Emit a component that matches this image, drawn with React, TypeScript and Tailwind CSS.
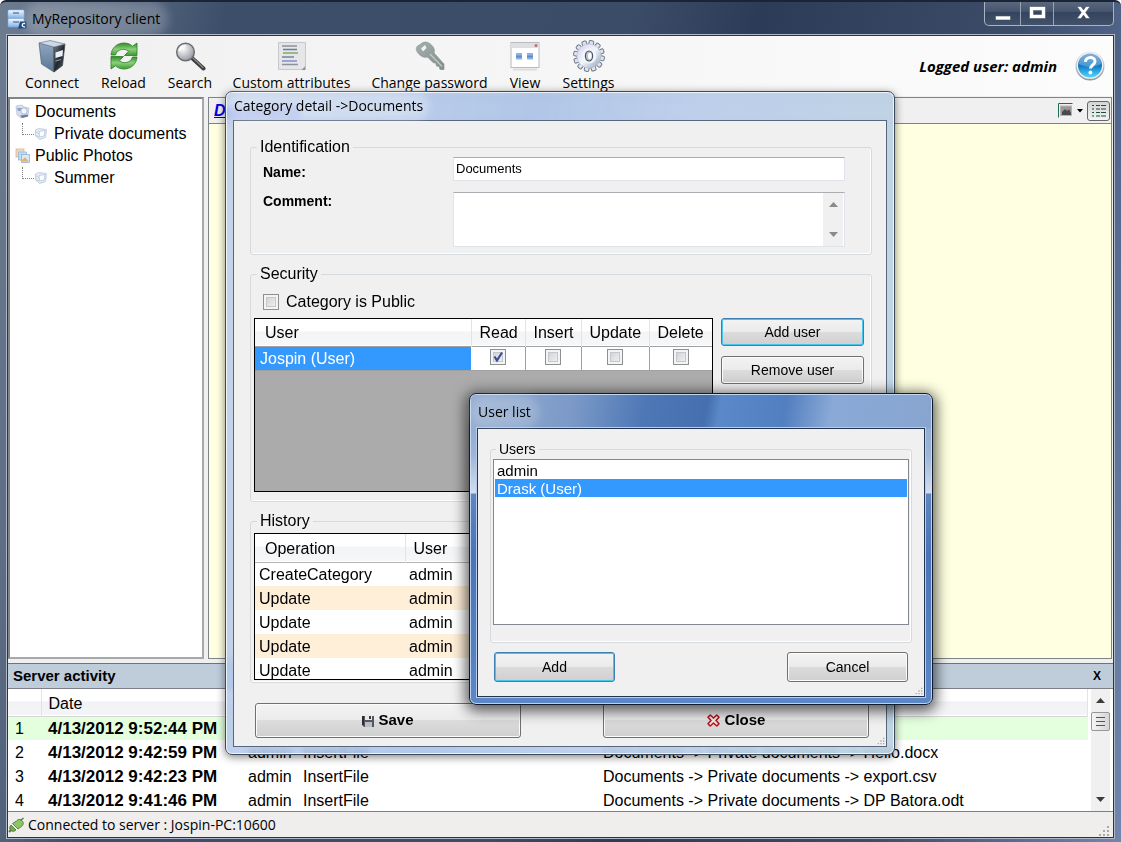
import React, { useState } from "react";

const UI = "font-['Open_Sans',sans-serif]";
const GRAY_BTN =
  "border border-[#707070] rounded-[3px] bg-[linear-gradient(#f3f3f3_0%,#ebebeb_48%,#dcdcdc_50%,#cfcfcf_100%)] text-black shadow-[inset_0_0_0_1px_#fbfbfb]";
const FOCUS_BTN =
  "border border-[#3c7fb1] rounded-[3px] bg-[linear-gradient(#f3f3f3_0%,#ebebeb_48%,#dcdcdc_50%,#cfcfcf_100%)] text-black shadow-[inset_0_0_0_1px_#48c5ee]";

/* ---------- icons ---------- */

const AppIcon = () => (
  <svg width="20" height="20" viewBox="0 0 20 20">
    <defs>
      <linearGradient id="cab" x1="0" y1="0" x2="0" y2="1">
        <stop offset="0" stopColor="#f4faff" />
        <stop offset="1" stopColor="#7fb2ee" />
      </linearGradient>
    </defs>
    <rect x="1" y="1" width="16" height="8" rx="1" fill="url(#cab)" stroke="#8fb7e6" strokeWidth="0.6" />
    <rect x="1" y="9.5" width="16" height="8.5" rx="1" fill="url(#cab)" stroke="#7fa9da" strokeWidth="0.6" />
    <path d="M6 4h6M6 13h6" stroke="#6f7f92" strokeWidth="1.4" />
    <path d="M11 19.5l2-7h6.5v7z" fill="#174a86" />
    <path d="M18 14.6c-3.6-1-3.6 4.2 0 3.2" fill="none" stroke="#fff" strokeWidth="1.3" />
  </svg>
);

const ServerIcon = () => (
  <svg width="32" height="34" viewBox="0 0 32 34">
    <defs>
      <linearGradient id="sv1" x1="0" y1="0" x2="0" y2="1">
        <stop offset="0" stopColor="#8fa6bf" />
        <stop offset="1" stopColor="#5a7694" />
      </linearGradient>
      <linearGradient id="sv2" x1="0" y1="0" x2="1" y2="1">
        <stop offset="0" stopColor="#7a8086" />
        <stop offset="0.5" stopColor="#23282e" />
        <stop offset="1" stopColor="#5d646c" />
      </linearGradient>
    </defs>
    <path d="M3 4l15 4v25L5.500 25z" fill="url(#sv1)" stroke="#4a6079" strokeWidth="0.7" />
    <path d="M18 8l11-3-2.500 21.500L18 33z" fill="url(#sv2)" stroke="#3a4148" strokeWidth="0.7" />
    <path d="M3 4l11-2.500 15 3.500-11 3z" fill="#cdd9e6" stroke="#6c8097" strokeWidth="0.7" />
    <path d="M19.500 13.500l7.500-2.500-.5 6-7 2z" fill="#e9f1f8" />
    <path d="M19.500 22l5.500-1.500" stroke="#8fa0b2" strokeWidth="1" />
  </svg>
);

const ReloadIcon = () => (
  <svg width="32" height="32" viewBox="0 0 32 32">
    <defs>
      <linearGradient id="rl" x1="0" y1="0" x2="0" y2="1">
        <stop offset="0" stopColor="#2f8a25" />
        <stop offset="0.5" stopColor="#8ad07b" />
        <stop offset="1" stopColor="#3c9a30" />
      </linearGradient>
    </defs>
    <path d="M3 15C3.500 8 9 3 16 3c3.500 0 6.500 1.200 8.500 3.200L29 3v12.500H16.500l4-4.200C17 7.800 9 9 7.500 15z" fill="url(#rl)" stroke="#2d7f24" strokeWidth="0.8" />
    <path d="M29 17c-.5 7-6 12-13 12-3.500 0-6.500-1.200-8.500-3.200L3 29V16.500h12.500l-4 4.200C15 24.200 23 23 24.500 17z" fill="url(#rl)" stroke="#2d7f24" strokeWidth="0.8" />
  </svg>
);

const SearchIcon = () => (
  <svg width="32" height="32" viewBox="0 0 32 32">
    <defs>
      <radialGradient id="gl" cx="0.35" cy="0.3" r="0.8">
        <stop offset="0" stopColor="#ffffff" />
        <stop offset="0.6" stopColor="#b9bdc2" />
        <stop offset="1" stopColor="#8d9196" />
      </radialGradient>
    </defs>
    <path d="M18 18l11.500 10.500" stroke="#3d3d3d" strokeWidth="4" strokeLinecap="round" />
    <path d="M19 18l10 9.500" stroke="#8a8a8a" strokeWidth="1.200" strokeLinecap="round" />
    <circle cx="11.500" cy="12" r="8.800" fill="url(#gl)" stroke="#6a6d71" strokeWidth="1.500" />
    <path d="M5.500 11c.5-3 3-5 6-5" stroke="#fff" strokeWidth="1.600" fill="none" />
  </svg>
);

const AttributesIcon = () => (
  <svg width="32" height="32" viewBox="0 0 32 32">
    <path d="M2.500 2.500h27v24l-3 3h-24z" fill="#e6e6e8" stroke="#c6c8cb" />
    <path d="M25.500 30l4-4v4z" fill="#8d9094" />
    <path d="M6 6h15M6 24.500h16" stroke="#8b929b" strokeWidth="1.300" />
    <path d="M7 9.500h14" stroke="#6a7c96" strokeWidth="1.300" />
    <path d="M7 13h15" stroke="#79ad72" strokeWidth="1.600" />
    <path d="M6 17h12" stroke="#7b8593" strokeWidth="1.300" />
    <path d="M6 21h15" stroke="#7d8ed6" strokeWidth="1.600" />
  </svg>
);

const KeyIcon = () => (
  <svg width="32" height="32" viewBox="0 0 32 32">
    <defs>
      <linearGradient id="ky" x1="0" y1="0" x2="1" y2="1">
        <stop offset="0" stopColor="#a4b0ad" />
        <stop offset="1" stopColor="#7f8d8b" />
      </linearGradient>
    </defs>
    <path
      d="M9 2.500c3-1 6 0 8.500 2.500s3.500 5 2.500 8L30 24v5.500h-4l-.8-3-2.700-.5-.7-2.800-2.800-.7-5.500-5.500c-3 1-6-.2-8.500-2.700C2.500 11.500 1.500 9 3 6.500z"
      fill="url(#ky)"
      stroke="#8a9694"
      strokeWidth="0.7"
    />
    <path d="M7 8.500l4-3.500 1.500 3-3.500 3.500z" fill="#f2f4f3" />
    <path d="M16 14l12 12.500" stroke="#c2cac8" strokeWidth="1.300" />
  </svg>
);

const ViewIcon = () => (
  <svg width="32" height="32" viewBox="0 0 32 32">
    <rect x="2" y="2.500" width="28" height="25" fill="#fff" stroke="#b8babd" />
    <rect x="2.500" y="3" width="27" height="5" fill="#dedfe1" />
    <circle cx="27" cy="5.500" r="1.500" fill="#c26d6d" />
    <rect x="7" y="13" width="6" height="6.500" fill="#8fb2e4" />
    <rect x="18" y="13" width="6" height="6.500" fill="#8fb2e4" />
    <path d="M7 16.500h6M18 16.500h6" stroke="#5c8bd0" strokeWidth="2" />
    <path d="M4 29.500h24" stroke="#dcdcdc" strokeWidth="2" />
  </svg>
);

const GearIcon = () => (
  <svg width="34" height="34" viewBox="-17 -17 34 34">
    <defs>
      <linearGradient id="gr" x1="0" y1="0" x2="1" y2="1">
        <stop offset="0" stopColor="#d8d0f4" />
        <stop offset="0.5" stopColor="#f2f5fa" />
        <stop offset="1" stopColor="#8fa0b4" />
      </linearGradient>
    </defs>
    {Array.from({ length: 12 }, (_, i) => (
      <rect key={i} x="-2.300" y="-15.500" width="4.600" height="6" rx="1.200" fill="#dfe3ef" stroke="#6f7b8e" strokeWidth="1" transform={`rotate(${i * 30 + 10})`} />
    ))}
    <circle r="12" fill="url(#gr)" stroke="#b4bccb" strokeWidth="0.6" />
    <circle r="7.500" fill="#f2f5fb" />
    <ellipse rx="3.600" ry="5" fill="#b9c0cc" stroke="#4a5464" strokeWidth="1.200" />
    <ellipse cx="0.800" rx="1.800" ry="3.300" fill="#fff" />
  </svg>
);

const HelpIcon = () => (
  <svg width="32" height="32" viewBox="0 0 32 32">
    <defs>
      <linearGradient id="hp" x1="0" y1="0" x2="0" y2="1">
        <stop offset="0" stopColor="#5a94c8" />
        <stop offset="0.5" stopColor="#1178c4" />
        <stop offset="1" stopColor="#4fd8ff" />
      </linearGradient>
      <linearGradient id="hr" x1="0" y1="0" x2="0" y2="1">
        <stop offset="0" stopColor="#e4e8ec" />
        <stop offset="1" stopColor="#8f969d" />
      </linearGradient>
    </defs>
    <circle cx="16" cy="16" r="14.500" fill="url(#hr)" />
    <circle cx="16" cy="15.500" r="13.300" fill="#eef3f7" />
    <circle cx="16" cy="15.500" r="12" fill="url(#hp)" />
    <path d="M5 14a11 11 0 0 1 22 0c-5 3-15 4-22 0z" fill="#fff" opacity="0.25" />
    <path d="M11.500 12c0-6 9.500-6 9.500-.5 0 3.500-4.500 3.500-4.500 7" fill="none" stroke="#fff" strokeWidth="3" />
    <circle cx="16.400" cy="22.500" r="1.900" fill="#fff" />
  </svg>
);

const TreeRootIcon = () => (
  <svg width="16" height="16" viewBox="0 0 16 16">
    <path d="M1 2l6-1 2 2 5 1-1 8-7 2-4-3z" fill="#d5dff0" stroke="#b5c1d6" strokeWidth="0.7" />
    <path d="M2 4h5v3H3z" fill="#8fa3c4" />
    <circle cx="9" cy="7" r="3.200" fill="#f3f7fd" stroke="#a8b8d4" />
    <path d="M5 11.500l8-1v2L7 14z" fill="#6f7f9e" />
  </svg>
);

const TreeLeafIcon = () => (
  <svg width="14" height="14" viewBox="0 0 14 14">
    <path d="M1.500 3l3-1.500 8 1-1 8-6 2-4-3.500z" fill="#e6ecf6" stroke="#bac6da" strokeWidth="0.8" />
    <path d="M5 4.500l6-1-.8 5.500-4.700 1z" fill="#fff" stroke="#b5c4de" strokeWidth="0.8" />
    <path d="M1 4l4 3M1 8l4 2" stroke="#c4cee0" />
  </svg>
);

const PhotosIcon = () => (
  <svg width="16" height="16" viewBox="0 0 16 16">
    <rect x="1" y="1" width="8" height="8" fill="#f1d9ba" stroke="#cdb18c" strokeWidth="0.7" />
    <rect x="3.500" y="4" width="8" height="8" fill="#c4dcf3" stroke="#8fb2d8" strokeWidth="0.7" />
    <rect x="6.500" y="6.500" width="8" height="8" fill="#d9e7f7" stroke="#89a8d0" strokeWidth="0.7" />
    <path d="M7 12l3-2.500 4 4H7z" fill="#e7ae6c" />
  </svg>
);

const PlugIcon = () => (
  <svg width="16" height="16" viewBox="0 0 16 16">
    <path d="M1 15l3-3" stroke="#5a7a45" strokeWidth="2" />
    <path d="M3 8l5 5c-2 2-4 1.500-5.200.3S1 10 3 8z" fill="#6fae4a" stroke="#466e30" strokeWidth="0.8" />
    <path d="M4.500 6.500l5.500 5.500 4-3c2-2 1.500-4-.2-5.500s-3.800-1.500-5.300.5z" fill="#8cc763" stroke="#466e30" strokeWidth="0.8" />
    <path d="M12.500 3.500L15.500 1" stroke="#5a7a45" strokeWidth="1.500" />
  </svg>
);

const SaveIcon = () => (
  <svg width="12" height="12" viewBox="0 0 12 12">
    <path d="M0 1h12v11H2l-2-2z" fill="#54585e" />
    <path d="M0 1h2v9H0z" fill="#2b2d31" />
    <rect x="3" y="0" width="7" height="5" fill="#e4eaf0" />
    <rect x="7" y="1" width="2" height="3" fill="#3a3d42" />
    <rect x="3" y="7" width="7" height="5" fill="#b9bec5" />
  </svg>
);

const CrossIcon = () => (
  <svg width="13" height="13" viewBox="0 0 13 13">
    <path
      d="M3.200 1l3.300 3 3.300-3L12 3.200l-3 3.300 3 3.300-2.200 2.200-3.300-3-3.300 3L1 9.800l3-3.300-3-3.300z"
      fill="#fbe3e3"
      stroke="#b0141c"
      strokeWidth="1.500"
      strokeLinejoin="round"
    />
  </svg>
);

const Arrow = ({ up = false, dim = false }: { up?: boolean; dim?: boolean }) => (
  <svg width="9" height="5" viewBox="0 0 9 5" className="mx-auto">
    <path d={up ? "M0 5l4.500-5L9 5z" : "M0 0h9L4.500 5z"} fill={dim ? "#8a8a8a" : "#3c3c3c"} />
  </svg>
);

const Grip = ({ size = 12 }: { size?: number }) => (
  <svg width={size} height={size} viewBox="0 0 12 12">
    <path d="M9 1h2v2H9zM9 5h2v2H9zM5 5h2v2H5zM9 9h2v2H9zM5 9h2v2H5zM1 9h2v2H1z" fill="#a9a9a9" />
  </svg>
);

/* ---------- shared parts ---------- */

function CheckBox({ label, value, onChange }: { label: string; value: boolean; onChange: (v: boolean) => void }) {
  return (
    <span className="inline-grid size-4 align-middle">
      <input
        type="checkbox"
        aria-label={label}
        checked={value}
        onChange={(e) => onChange(e.target.checked)}
        className="[grid-area:1/1] size-4 appearance-none border border-[#8e8f8f] bg-[linear-gradient(135deg,#c9cdd2,#f6f6f6)] shadow-[inset_0_0_0_2px_#f4f4f4,inset_0_0_0_3px_#c4c8cd]"
      />
      {value && (
        <svg viewBox="0 0 16 16" className="pointer-events-none z-10 size-4 [grid-area:1/1]">
          <path d="M4.500 7.500l2.500 4 5-8" fill="none" stroke="#3b4f94" strokeWidth="2.200" />
        </svg>
      )}
    </span>
  );
}

function Group({ title, small = false, className = "", children }: { title: string; small?: boolean; className?: string; children: React.ReactNode }) {
  return (
    <fieldset className={`min-w-0 rounded-[3px] border border-[#d5dadf] shadow-[inset_-1px_-1px_0_#fff] ${className}`}>
      <legend className={`px-[3px] leading-[18px] ${small ? "ml-[3px] text-[14px]" : "ml-[6px] text-[16px]"}`}>{title}</legend>
      {children}
    </fieldset>
  );
}

/* ---------- main window ---------- */

const tools = [
  { label: "Connect", icon: <ServerIcon />, width: "w-[54px]" },
  { label: "Reload", icon: <ReloadIcon />, width: "w-[47px]" },
  { label: "Search", icon: <SearchIcon />, width: "w-[44px]" },
  { label: "Custom attributes", icon: <AttributesIcon />, width: "w-[117px]" },
  { label: "Change password", icon: <KeyIcon />, width: "w-[117px]" },
  { label: "View", icon: <ViewIcon />, width: "w-[32px]" },
  { label: "Settings", icon: <GearIcon />, width: "w-[53px]" },
];

const TitleBar = () => (
  <header className="flex h-[35px] shrink-0 items-start justify-between">
    <div className="flex items-center gap-[5px] pt-[9px]">
      <AppIcon />
      <h1 className={`${UI} rounded-full bg-white/20 text-[14px] leading-5 text-black shadow-[0_0_10px_8px_rgba(255,255,255,0.2)]`}>MyRepository client</h1>
    </div>
    <div className="flex h-[26px] overflow-hidden rounded-b-[5px] border border-t-0 border-[#a9b3c2] bg-[linear-gradient(#5d6b82,#44536c_50%,#35445e_50%,#43526b)] text-white">
      <button aria-label="Minimize" className="grid w-[36px] place-items-center border-r border-[#98a4b6]">
        <svg width="16" height="14" viewBox="0 0 16 14"><path d="M0.500 10h15v4h-15z" fill="#fff" stroke="#4b5667" strokeWidth="0.6" /></svg>
      </button>
      <button aria-label="Maximize" className="grid w-[33px] place-items-center border-r border-[#98a4b6]">
        <svg width="17" height="13" viewBox="0 0 17 13"><path fillRule="evenodd" d="M0.500 0.500h16v12h-16zM4.500 4.500h8v4h-8z" fill="#fff" stroke="#4b5667" strokeWidth="0.6" /></svg>
      </button>
      <button aria-label="Close window" className="grid w-[59px] place-items-center">
        <svg width="15" height="13" viewBox="0 0 15 13"><path d="M1 .5h4L7.500 4 10 .5h4l-4.300 6L14 12.500h-4L7.500 9 5 12.500H1l4.300-6z" fill="#fff" stroke="#4b5667" strokeWidth="0.6" /></svg>
      </button>
    </div>
  </header>
);

const Toolbar = () => (
  <div className={`${UI} flex h-[60px] shrink-0 items-center justify-between bg-[linear-gradient(90deg,#f0f0f0,#fcfcfc)] pl-[17px] pr-[7px]`}>
    <nav className="flex gap-[21px]">
      {tools.map((t) => (
        <button key={t.label} className={`flex h-[56px] flex-col items-center justify-start ${t.width}`}>
          <span className="grid h-[35px] place-items-center">{t.icon}</span>
          <span className="whitespace-nowrap text-[14px] leading-[20px] text-black">{t.label}</span>
        </button>
      ))}
    </nav>
    <div className="flex items-center gap-[17px]">
      <strong className="text-[15px] font-bold italic">Logged user: admin</strong>
      <button aria-label="Help"><HelpIcon /></button>
    </div>
  </div>
);

function TreeNode({ label, icon, child }: { label: string; icon: React.ReactNode; child: string }) {
  return (
    <li>
      <div className="flex h-[22px] items-center gap-[4px]">{icon}<span>{label}</span></div>
      <ul>
        <li className="flex h-[22px] items-center gap-[6px] pl-[7px]">
          <span className="mb-[11px] h-[12px] w-[12px] border-b border-l border-dotted border-[#808080]" />
          <span className="-ml-[6px]"><TreeLeafIcon /></span>
          <span>{child}</span>
        </li>
      </ul>
    </li>
  );
}

const activity = [
  ["1", "4/13/2012 9:52:44 PM", "", "", ""],
  ["2", "4/13/2012 9:42:59 PM", "admin", "InsertFile", "Documents -> Private documents -> Hello.docx"],
  ["3", "4/13/2012 9:42:23 PM", "admin", "InsertFile", "Documents -> Private documents -> export.csv"],
  ["4", "4/13/2012 9:41:46 PM", "admin", "InsertFile", "Documents -> Private documents -> DP Batora.odt"],
];

const ServerActivity = () => (
  <section className="shrink-0">
    <div className="flex h-[25px] items-center justify-between border-t border-[#6e747c] bg-[#bfcddb] pl-[5px] pr-[12px]">
      <h2 className="text-[15px] font-bold leading-[20px]">Server activity</h2>
      <button aria-label="Close panel" className="text-[12px] font-bold leading-none">X</button>
    </div>
    <div className="flex h-[124px] border-y border-[#7c7f84] bg-white">
      <div className="min-w-0 flex-1 overflow-hidden pr-[3px]">
        <table className="w-full table-fixed border-collapse text-left text-[16px] leading-[20px]">
          <colgroup>
            <col className="w-[33px]" />
            <col className="w-[200px]" />
            <col className="w-[55px]" />
            <col className="w-[300px]" />
            <col />
          </colgroup>
          <thead>
            <tr className="h-[27px] border-b border-[#d5d5d5] bg-[linear-gradient(#fff_45%,#f1f2f4_50%,#f4f5f7)]">
              <th className="border-r border-[#e0e3e8]" />
              <th className="pl-[7px] pt-[4px] font-normal">Date</th>
              <th /><th /><th className="border-r border-[#e0e3e8]" />
            </tr>
          </thead>
          <tbody>
            {activity.map((r, i) => (
              <tr key={r[0]} className={`h-[24px] whitespace-nowrap ${i === 0 ? "bg-[#e3ffdd]" : ""}`}>
                <td className="pl-[7px] pt-[2px]">{r[0]}</td>
                <td className="pl-[7px] pt-[2px] text-[17px] font-bold">{r[1]}</td>
                <td className="pl-[7px] pt-[2px]">{r[2]}</td>
                <td className="pl-[7px] pt-[2px]">{r[3]}</td>
                <td className="pl-[7px] pt-[2px]">{r[4]}</td>
              </tr>
            ))}
          </tbody>
        </table>
      </div>
      <div className="mr-[3px] flex w-[19px] flex-col bg-[#f0f0f0]">
        <button aria-label="Scroll up" className="grid h-[23px] place-items-center"><Arrow up /></button>
        <button aria-label="Scroll thumb" className="flex h-[19px] flex-col justify-center gap-[3px] rounded-[2px] border border-[#979797] bg-[linear-gradient(90deg,#f5f5f5,#d5d5d5)] px-[4px]">
          <span className="h-px bg-[#555]" /><span className="h-px bg-[#555]" /><span className="h-px bg-[#555]" />
        </button>
        <button aria-label="Scroll down" className="mt-auto grid h-[24px] place-items-center"><Arrow /></button>
      </div>
    </div>
  </section>
);

/* ---------- category dialog ---------- */

const history = ["CreateCategory", "Update", "Update", "Update", "Update"];
const rights = ["Read", "Insert", "Update", "Delete"];
const HEAD = "bg-[linear-gradient(#fff_45%,#f3f4f6_50%,#f6f7f9)]";

function CategoryDialog() {
  const [name, setName] = useState("Documents");
  const [comment, setComment] = useState("");
  const [isPublic, setPublic] = useState(false);
  const [granted, setGranted] = useState([true, false, false, false]);
  return (
    <section
      role="dialog"
      aria-label="Category detail"
      className="absolute left-[225px] top-[91px] w-[670px] rounded-[7px] border border-[#3c4a5c] bg-[linear-gradient(100deg,rgba(184,203,234,0.8),rgba(166,191,230,0.85)_40%,rgba(184,203,234,0.9)_60%,rgba(186,209,224,0.9))] px-[7px] pb-[7px] shadow-[inset_0_0_0_1px_rgba(255,255,255,0.75),0_2px_8px_rgba(0,0,0,0.5)] backdrop-blur-[3px]"
    >
      <header className="flex h-[28px] items-center pl-[1px]">
        <h2 className={`${UI} rounded-full bg-white/30 text-[14px] leading-[18px] shadow-[0_0_8px_6px_rgba(255,255,255,0.3)]`}>Category detail -&gt;Documents</h2>
      </header>
      <div className="flex flex-col gap-[10px] border border-[#56667c] bg-[#f0f0f0] pb-px pl-[16px] pr-[14px] pt-[17px]">
        <Group title="Identification" className="pb-[7px]">
          <div className="grid grid-cols-[190px_1fr] pl-[12px] pr-[26px] pt-px">
            <label htmlFor="name" className="pt-[6px] text-[14px] font-bold leading-[18px]">Name:</label>
            <input id="name" value={name} onChange={(e) => setName(e.target.value)} className="h-[24px] border border-[#e1e4ea] border-t-[#abadb3] bg-white px-[2px] pb-[2px] text-[13px]" />
            <label htmlFor="comment" className="pt-[11px] text-[14px] font-bold leading-[18px]">Comment:</label>
            <div className="mt-[11px] flex h-[55px] border border-[#e1e4ea] border-t-[#abadb3] bg-white">
              <textarea id="comment" value={comment} onChange={(e) => setComment(e.target.value)} className="min-w-0 flex-1 resize-none text-[13px]" />
              <div className="mr-px flex w-[20px] flex-col justify-between bg-[#f0f0f0] py-[9px]">
                <button aria-label="Comment up"><Arrow up dim /></button>
                <button aria-label="Comment down"><Arrow dim /></button>
              </div>
            </div>
          </div>
        </Group>

        <Group title="Security" className="pb-[9px]">
          <label className="ml-[12px] flex h-[35px] items-center gap-[7px] pt-[2px] text-[16px]">
            <CheckBox label="Category is Public" value={isPublic} onChange={setPublic} />
            Category is Public
          </label>
          <div className="flex gap-[8px] pl-[3px] pr-[7px]">
            <div className="h-[174px] min-w-0 flex-1 border border-black bg-[#ababab]">
              <table className="w-full table-fixed border-collapse text-left text-[16px] leading-[20px]">
                <colgroup>
                  <col />
                  <col className="w-[54px]" />
                  <col className="w-[56px]" />
                  <col className="w-[68px]" />
                  <col className="w-[63px]" />
                </colgroup>
                <thead>
                  <tr className={`h-[27px] border-b border-[#a0a0a0] ${HEAD}`}>
                    <th className="border-r border-[#e0e3e8] pl-[10px] pt-[2px] font-normal">User</th>
                    {rights.map((r) => (
                      <th key={r} className="border-r border-[#e0e3e8] pl-[8px] pt-[2px] font-normal last:border-r-0">{r}</th>
                    ))}
                  </tr>
                </thead>
                <tbody>
                  <tr className="h-[24px] border-b border-[#a0a0a0] bg-white">
                    <td className="bg-[#3399ff] pl-[5px] pt-[2px] text-white">Jospin (User)</td>
                    {rights.map((r, i) => (
                      <td key={r} className="border-r border-[#a0a0a0] pb-[2px] text-center leading-[0px] last:border-r-0">
                        <CheckBox label={r} value={granted[i]} onChange={(v) => setGranted(granted.map((g, j) => (j === i ? v : g)))} />
                      </td>
                    ))}
                  </tr>
                </tbody>
              </table>
            </div>
            <div className="flex w-[143px] flex-col gap-[10px]">
              <button className={`${FOCUS_BTN} h-[28px] text-[14px]`}>Add user</button>
              <button className={`${GRAY_BTN} h-[28px] text-[14px]`}>Remove user</button>
            </div>
          </div>
        </Group>

        <Group title="History" className="pb-[2px]">
          <div className="mx-[3px] mt-[3px] h-[147px] overflow-hidden border border-black bg-white">
            <table className="w-full table-fixed border-collapse text-left text-[16px] leading-[20px]">
              <colgroup>
                <col className="w-[150px]" />
                <col />
              </colgroup>
              <thead>
                <tr className={`h-[28px] border-b border-[#b5b5b5] ${HEAD}`}>
                  <th className="border-r border-[#e0e3e8] pl-[10px] pt-[2px] font-normal">Operation</th>
                  <th className="pl-[8px] pt-[2px] font-normal">User</th>
                </tr>
              </thead>
              <tbody>
                {history.map((h, i) => (
                  <tr key={i} className="h-[24px] even:bg-[#ffefd8]">
                    <td className="pl-[4px] pt-[2px]">{h}</td>
                    <td className="pl-[4px] pt-[2px]">admin</td>
                  </tr>
                ))}
              </tbody>
            </table>
          </div>
        </Group>

        <div className="flex justify-between pl-[5px] pr-[3px] pt-[10px]">
          <button className={`${GRAY_BTN} flex h-[35px] w-[266px] items-center justify-center gap-[4px] text-[15px] font-bold`}><SaveIcon />Save</button>
          <button className={`${GRAY_BTN} flex h-[35px] w-[266px] items-center justify-center gap-[5px] text-[15px] font-bold`}><CrossIcon />Close</button>
        </div>
        <div className="-mr-[13px] -mt-[11px] flex justify-end"><Grip size={8} /></div>
      </div>
    </section>
  );
}

/* ---------- user dialog ---------- */

function UserDialog() {
  const [selected, setSelected] = useState("Drask (User)");
  return (
    <section
      role="dialog"
      aria-label="User list"
      className="absolute left-[469px] top-[393px] w-[464px] rounded-[7px] border border-[#101c2e] bg-[linear-gradient(#86a2cc_0px,#9db4d6_60px,#d3deee_99px,#5f86c0_100px,#4a74b8_160px,#5c88c6_100%)] px-[7px] pb-[7px] shadow-[inset_0_0_0_1px_rgba(210,228,250,0.8),0_3px_14px_3px_rgba(0,0,0,0.65)]"
    >
      <header className="-mx-[6px] mt-px flex h-[33px] items-center rounded-t-[5px] bg-[linear-gradient(100deg,#94acd0_0%,#7c9ac8_22%,#4d77b5_38%,#456fae_51%,#5b88c8_54%,#527fc0_68%,#8aa9d6_78%,#88a5d0_100%)] pl-[7px]">
        <h2 className={`${UI} rounded-full bg-white/20 text-[14px] leading-[18px] shadow-[0_0_10px_8px_rgba(255,255,255,0.2)]`}>User list</h2>
      </header>
      <div className="border border-[#22344f] bg-[#f0f0f0] px-[12px] pb-px pt-[11px] shadow-[0_0_0_1px_#b9cdea]">
        <Group title="Users" small className="px-[2px] pb-[17px]">
          <ul role="listbox" aria-label="Users" className="mt-px h-[166px] border border-[#828790] bg-white p-px text-[15px] leading-[20px]">
            {["admin", "Drask (User)"].map((u) => (
              <li key={u} role="option" aria-selected={u === selected} onClick={() => setSelected(u)} className={`h-[18px] pl-[2px] ${u === selected ? "bg-[#3399ff] text-white" : "text-black"}`}>
                {u}
              </li>
            ))}
          </ul>
        </Group>
        <div className="flex justify-between px-[4px] pt-[9px]">
          <button className={`${FOCUS_BTN} h-[30px] w-[121px] text-[14px]`}>Add</button>
          <button className={`${GRAY_BTN} h-[30px] w-[121px] text-[14px]`}>Cancel</button>
        </div>
        <div className="-mr-[11px] mt-[5px] flex justify-end"><Grip size={8} /></div>
      </div>
    </section>
  );
}

export default function App() {
  return (
    <main className="relative flex min-h-screen flex-col overflow-hidden rounded-t-[6px] border-t-2 border-[#1b2434] bg-[linear-gradient(100deg,#6d7c8f_0%,#5d6d84_8%,#3c4e6a_18%,#3b4c69_50%,#2c3b58_60%,#3b4b68_80%,#53678c_90%,#7186ac_100%)] px-[7px] pb-[4px] font-['Liberation_Sans',Arial,sans-serif] text-black">
      <div className="-mt-[2px] flex flex-1 flex-col">
        <TitleBar />
        <div className="flex flex-1 flex-col border border-[#26344c] bg-[#f0f0f0] shadow-[0_0_0_1px_#aeb8c6]">
          <Toolbar />
          <div className="flex flex-1 gap-[4px] pb-[4px] pr-px pt-px">
            <aside className="w-[196px] border-2 border-[#808489] border-b-[#a5a8ac] border-r-[#a5a8ac] bg-white pl-[5px] pt-[2px] text-[16px]">
              <ul>
                <TreeNode label="Documents" icon={<TreeRootIcon />} child="Private documents" />
                <TreeNode label="Public Photos" icon={<PhotosIcon />} child="Summer" />
              </ul>
            </aside>
            <section className="flex flex-1 flex-col border border-[#808489] bg-[#ffffe1]">
              <div className="flex h-[26px] items-center justify-between border-b border-[#808489] bg-[#f0f0f0] pl-[5px] pr-px">
                <a href="#documents" className="text-[16px] font-bold italic text-[#0000e0] underline">Documents</a>
                <div className="flex items-center gap-[4px]">
                  <button aria-label="Thumbnails" className="flex items-center gap-[3px]">
                    <svg width="16" height="15" viewBox="0 0 16 15">
                      <path d="M.5 14.500V.5h14" fill="none" stroke="#1e6e56" />
                      <rect x="2.500" y="3" width="11" height="9.500" fill="#999" stroke="#b5b5b5" />
                      <path d="M4 9l3-3 2 2 2-2 2 4v2H4z" fill="#4a4a4a" />
                      <path d="M9 5h3v2H9z" fill="#b78080" />
                    </svg>
                    <svg width="6" height="4" viewBox="0 0 6 4"><path d="M0 0h6L3 3.500z" fill="#000" /></svg>
                  </button>
                  <button aria-label="List view" className="grid h-[20px] w-[23px] place-items-center rounded-[3px] border border-[#666] bg-[linear-gradient(#d4d4d4,#f4f4f4)]">
                    <svg width="14" height="13" viewBox="0 0 14 13"><path d="M0 1.500h2M0 5h2M0 8.500h2M0 12h2M4 1.500h4M9 1.500h5M4 5h4M9 5h5M4 8.500h4M9 8.500h5M4 12h4M9 12h5" stroke="#18503c" strokeWidth="1.200" /></svg>
                  </button>
                </div>
              </div>
            </section>
          </div>
          <ServerActivity />
          <footer className={`${UI} flex h-[25px] shrink-0 items-center justify-between bg-[#f0eded] text-[14px]`}>
            <p className="flex items-center gap-[4px]"><PlugIcon />Connected to server : Jospin-PC:10600</p>
            <span className="self-end pr-[3px]"><Grip /></span>
          </footer>
        </div>
      </div>
      <div className="absolute left-0 top-0 -mt-[2px]">
        <CategoryDialog />
        <UserDialog />
      </div>
    </main>
  );
}
